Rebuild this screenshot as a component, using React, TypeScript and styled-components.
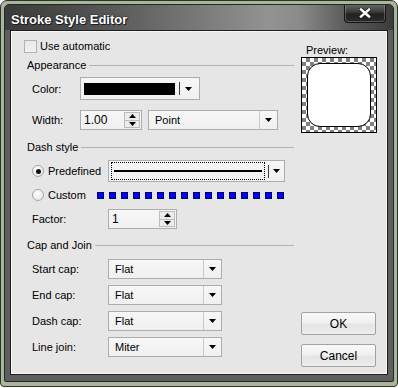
import React from "react";
import styled, { createGlobalStyle } from "styled-components";

const GlobalStyle = createGlobalStyle`
  html, body {
    margin: 0;
    padding: 0;
    background: #ffffff;
  }

  body {
    font-family: "Liberation Sans", Arial, sans-serif;
    font-size: 11px;
    color: #000;
  }
`;

const Arrow = () => (
  <svg width="7" height="4" viewBox="0 0 7 4">
    <path d="M0 0h7L3.5 4z" fill="#000" />
  </svg>
);

const UpArrow = () => (
  <svg width="7" height="4" viewBox="0 0 7 4">
    <path d="M0 4h7L3.5 0z" fill="#000" />
  </svg>
);

const capRows = [
  { label: "Start cap:", value: "Flat" },
  { label: "End cap:", value: "Flat" },
  { label: "Dash cap:", value: "Flat" },
  { label: "Line join:", value: "Miter" },
];

const App = () => {
  return (
    <>
      <GlobalStyle />
      <Window>
        <Frame>
          <TitleBar>
            <Title>Stroke Style Editor</Title>
            <CloseButton>
              <svg width="12" height="10" viewBox="0 0 12 10">
                <path
                  d="M2 1.5L10 8.5M10 1.5L2 8.5"
                  stroke="#222"
                  strokeWidth="4"
                  strokeLinecap="square"
                />
                <path
                  d="M2 1.5L10 8.5M10 1.5L2 8.5"
                  stroke="#fff"
                  strokeWidth="2.4"
                  strokeLinecap="square"
                />
              </svg>
            </CloseButton>
          </TitleBar>
          <ClientWrap>
            <Client>
              <MainColumn>
                <CheckRow>
                  <CheckBox />
                  <span>Use automatic</span>
                </CheckRow>

                <SectionTitle $top={5}>Appearance</SectionTitle>
                <FieldRow $top={5} $height={23}>
                  <Label $width={48}>Color:</Label>
                  <ColorCombo>
                    <Swatch />
                    <Separator />
                    <Arrow />
                  </ColorCombo>
                </FieldRow>
                <FieldRow $top={10} $height={20}>
                  <Label $width={48}>Width:</Label>
                  <SpinBox $width={62}>
                    <SpinText>1.00</SpinText>
                    <SpinButtons>
                      <SpinHalf>
                        <UpArrow />
                      </SpinHalf>
                      <SpinHalf>
                        <Arrow />
                      </SpinHalf>
                    </SpinButtons>
                  </SpinBox>
                  <Combo $width={130} $left={6}>
                    <ComboText>Point</ComboText>
                    <ComboButton>
                      <Arrow />
                    </ComboButton>
                  </Combo>
                </FieldRow>

                <SectionTitle $top={10}>Dash style</SectionTitle>
                <FieldRow $top={6} $height={22}>
                  <RadioLabel $width={76}>
                    <Radio $checked />
                    <span>Predefined</span>
                  </RadioLabel>
                  <DashCombo>
                    <FocusRect>
                      <DashLine />
                    </FocusRect>
                    <Separator />
                    <DashArrow>
                      <Arrow />
                    </DashArrow>
                  </DashCombo>
                </FieldRow>
                <FieldRow $top={6} $height={14}>
                  <RadioLabel $width={65}>
                    <Radio />
                    <span>Custom</span>
                  </RadioLabel>
                  <Dashes>
                    {Array.from({ length: 16 }).map((_, i) => (
                      <DashSquare key={i} />
                    ))}
                  </Dashes>
                </FieldRow>
                <FieldRow $top={7} $height={20}>
                  <Label $width={76}>Factor:</Label>
                  <SpinBox $width={69}>
                    <SpinText>1</SpinText>
                    <SpinButtons>
                      <SpinHalf>
                        <UpArrow />
                      </SpinHalf>
                      <SpinHalf>
                        <Arrow />
                      </SpinHalf>
                    </SpinButtons>
                  </SpinBox>
                </FieldRow>

                <SectionTitle $top={9}>Cap and Join</SectionTitle>
                {capRows.map((row, i) => (
                  <FieldRow key={row.label} $top={i === 0 ? 7 : 6} $height={20}>
                    <Label $width={76}>{row.label}</Label>
                    <Combo $width={114}>
                      <ComboText>{row.value}</ComboText>
                      <ComboButton>
                        <Arrow />
                      </ComboButton>
                    </Combo>
                  </FieldRow>
                ))}
              </MainColumn>

              <SideColumn>
                <PreviewLabel>Preview:</PreviewLabel>
                <PreviewBox>
                  <PreviewShape />
                </PreviewBox>
                <DialogButton $top="auto">OK</DialogButton>
                <DialogButton $top="9px">Cancel</DialogButton>
              </SideColumn>
            </Client>
          </ClientWrap>
        </Frame>
      </Window>
    </>
  );
};

export default App;

const Window = styled.div`
  box-sizing: border-box;
  display: flex;
  flex-direction: column;
  width: 398px;
  height: 387px;
  padding: 3px 3px 4px;

  background: #a8b69c;
  border: 1px solid #2c3328;
  border-radius: 7px 7px 4px 4px;
`;

const Frame = styled.div`
  display: flex;
  flex-direction: column;
  flex: 1;

  background: #5f5f5f;
  border: 1px solid #262626;
  border-radius: 5px 5px 2px 2px;
  overflow: hidden;
`;

const TitleBar = styled.div`
  display: flex;
  justify-content: space-between;
  align-items: flex-start;
  flex: none;
  height: 25px;
  padding: 0 7px 0 6px;

  background: linear-gradient(
    90deg,
    #3b3b3b 0%,
    #4f4f4f 20%,
    #727272 45%,
    #939393 68%,
    #8a8a8a 76%,
    #5a5a5a 88%,
    #3c3c3c 100%
  );
`;

const Title = styled.div`
  margin-top: 7px;

  color: #fff;
  font-size: 13px;
  font-weight: 700;
  text-shadow: 1px 1px 0 #1e1e1e, 0 0 2px #000;
`;

const CloseButton = styled.div`
  display: flex;
  align-items: center;
  justify-content: center;
  width: 40px;
  height: 18px;
  margin-top: -1px;

  background: linear-gradient(#6b6b6b 0%, #3a3a3a 45%, #222 55%, #2a2a2a 100%);
  border: 1px solid #161616;
  border-top: none;
  border-radius: 0 0 4px 4px;
  box-shadow: inset 0 0 0 1px rgba(255, 255, 255, 0.22);
`;

const ClientWrap = styled.div`
  display: flex;
  flex: 1;
  padding: 0 5px 6px;
`;

const Client = styled.div`
  display: flex;
  flex: 1;
  gap: 7px;
  padding: 8px 10px 7px 13px;

  background: #e6e6e6;
  border: 1px solid #1d1d1d;
  box-shadow: inset 0 0 0 1px #f6f6f6;
`;

const MainColumn = styled.div`
  display: flex;
  flex-direction: column;
  flex: 1;
`;

const SideColumn = styled.div`
  display: flex;
  flex-direction: column;
  width: 76px;
`;

const CheckRow = styled.label`
  display: flex;
  align-items: center;
  gap: 3px;
  height: 14px;
`;

const CheckBox = styled.span`
  box-sizing: border-box;
  width: 13px;
  height: 13px;

  background: linear-gradient(#e9e9e9, #f1f1f1);
  border: 1px solid #b2b2b2;
`;

const SectionTitle = styled.div<{ $top: number }>`
  display: flex;
  align-items: center;
  height: 14px;
  margin-top: ${(p) => p.$top}px;
  padding-left: 3px;

  &::after {
    content: "";
    flex: 1;
    height: 1px;
    margin-left: 3px;

    background: #b3b3b3;
  }
`;

const FieldRow = styled.div<{ $top: number; $height: number }>`
  display: flex;
  align-items: center;
  height: ${(p) => p.$height}px;
  margin-top: ${(p) => p.$top}px;
  padding-left: 8px;
`;

const Label = styled.span<{ $width: number }>`
  width: ${(p) => p.$width}px;
  flex: none;
`;

const RadioLabel = styled.label<{ $width: number }>`
  display: flex;
  align-items: center;
  gap: 4px;
  width: ${(p) => p.$width}px;
  flex: none;
`;

const Radio = styled.span<{ $checked?: boolean }>`
  box-sizing: border-box;
  position: relative;
  width: 12px;
  height: 12px;

  background: radial-gradient(circle at 40% 35%, #ffffff, #e2e2e2);
  border: 1px solid #a5a5a5;
  border-radius: 50%;

  &::after {
    content: "";
    display: ${(p) => (p.$checked ? "block" : "none")};
    position: absolute;
    left: 2.5px;
    top: 2.5px;
    width: 5px;
    height: 5px;

    background: #111;
    border-radius: 50%;
  }
`;

const BoxBase = styled.div`
  box-sizing: border-box;
  display: flex;
  align-items: center;
  height: 100%;

  background: linear-gradient(#f7f7f7, #f0f0f0);
  border: 1px solid #adadad;
`;

const ColorCombo = styled(BoxBase)`
  width: 120px;
  padding-left: 3px;
`;

const Swatch = styled.div`
  width: 91px;
  height: 12px;
  margin-right: 4px;

  background: #000;
`;

const Separator = styled.div`
  width: 1px;
  height: 13px;
  margin-right: 5px;

  background: #3c3c3c;
`;

const Combo = styled(BoxBase)<{ $width: number; $left?: number }>`
  width: ${(p) => p.$width}px;
  margin-left: ${(p) => p.$left ?? 0}px;
`;

const ComboText = styled.span`
  flex: 1;
  padding-left: 6px;
`;

const ComboButton = styled.div`
  display: flex;
  align-items: center;
  justify-content: center;
  width: 17px;
  height: 100%;

  border-left: 1px solid #cacaca;
`;

const DashCombo = styled(BoxBase)`
  width: 177px;
`;

const FocusRect = styled.div`
  box-sizing: border-box;
  display: flex;
  align-items: center;
  width: 154px;
  height: 18px;
  margin: 0 3px 0 2px;
  padding: 0 2px;

  border: 1px dotted #000;
`;

const DashLine = styled.div`
  flex: 1;
  height: 2px;

  background: #000;
`;

const DashArrow = styled.div`
  display: flex;
  justify-content: center;
  flex: 1;
  margin-left: -5px;
`;

const Dashes = styled.div`
  display: flex;
  gap: 5px;
`;

const DashSquare = styled.span`
  box-sizing: border-box;
  width: 7px;
  height: 7px;

  background: #0000ff;
  border: 1px solid #000066;
`;

const SpinBox = styled(BoxBase)<{ $width: number }>`
  width: ${(p) => p.$width}px;
`;

const SpinText = styled.span`
  flex: 1;
  padding-left: 3px;
  font-size: 12px;
`;

const SpinButtons = styled.div`
  box-sizing: border-box;
  display: flex;
  flex-direction: column;
  width: 16px;
  height: 16px;
  margin-right: 1px;

  border: 1px solid #bdbdbd;
  background: #ececec;
`;

const SpinHalf = styled.div`
  display: flex;
  align-items: center;
  justify-content: center;
  flex: 1;

  & + & {
    border-top: 1px solid #bdbdbd;
  }
`;

const PreviewLabel = styled.div`
  height: 13px;
  margin-top: 5px;
  padding-left: 5px;
  line-height: 13px;
`;

const PreviewBox = styled.div`
  box-sizing: border-box;
  display: flex;
  align-items: center;
  justify-content: center;
  width: 76px;
  height: 76px;

  border: 1px solid #000;
  background-color: #fff;
  background-image: conic-gradient(
    #808080 25%,
    #fff 0 50%,
    #808080 0 75%,
    #fff 0
  );
  background-size: 8px 8px;
`;

const PreviewShape = styled.div`
  box-sizing: border-box;
  width: 64px;
  height: 64px;

  background: #fff;
  border: 1px solid #000;
  border-radius: 13px;
`;

const DialogButton = styled.div<{ $top: string }>`
  box-sizing: border-box;
  display: flex;
  align-items: center;
  justify-content: center;
  width: 75px;
  height: 23px;
  margin-top: ${(p) => p.$top};

  background: linear-gradient(#f9f9f9 0%, #f1f1f1 45%, #e4e4e4 55%, #ededed 100%);
  border: 1px solid #a2a2a2;
  border-radius: 2px;
  font-size: 12px;
`;
